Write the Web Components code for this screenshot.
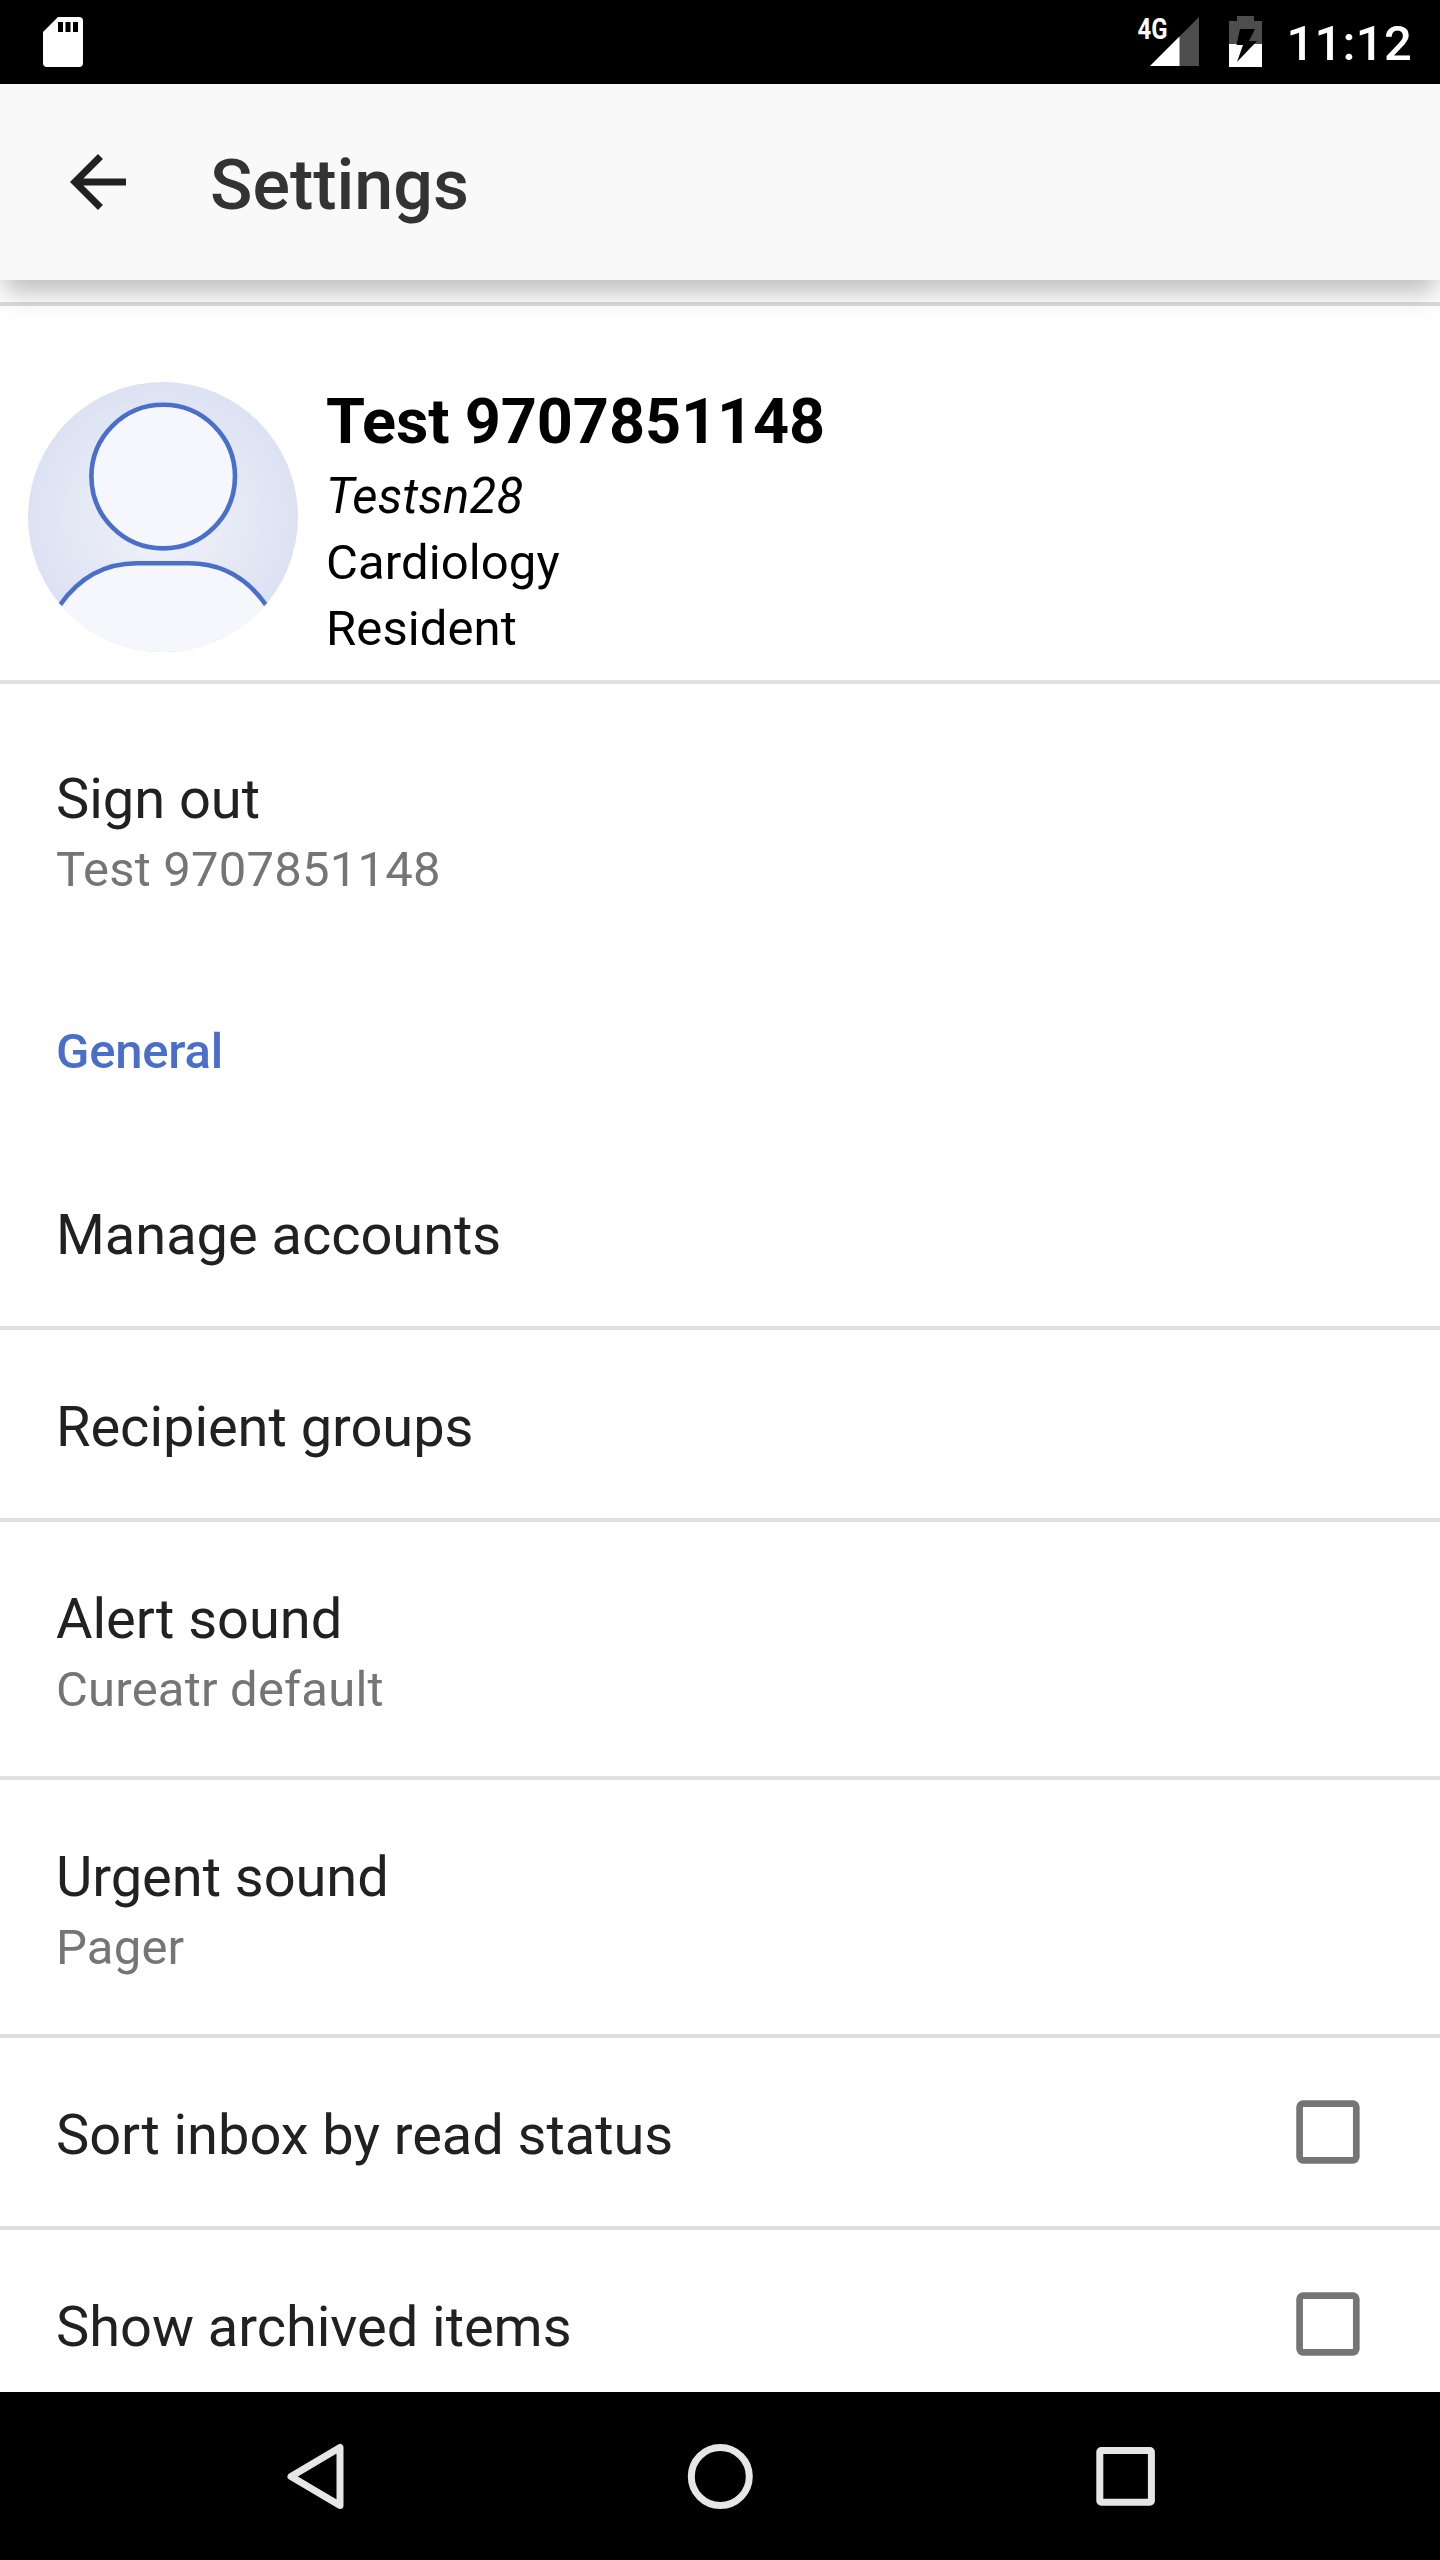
<!DOCTYPE html>
<html lang="en">
<head>
<meta charset="utf-8">
<title>Settings</title>
<style>
html,body{margin:0;padding:0}
body{width:1440px;height:2560px;overflow:hidden;font-family:Roboto,"Liberation Sans",sans-serif;background:#fff}
</style>
</head>
<body>
<settings-screen></settings-screen>
<script>
function define(name, html, setup) {
  const t = document.createElement('template');
  t.innerHTML = html;
  customElements.define(name, class extends HTMLElement {
    constructor() {
      super();
      this.attachShadow({ mode: 'open' }).appendChild(t.content.cloneNode(true));
    }
    connectedCallback() { if (setup) setup(this, this.shadowRoot); }
  });
}

define('status-bar', `
<style>
:host{display:flex;justify-content:space-between;height:84px;background:#000;color:#fff;flex:none}
svg{display:block}
.right{display:flex;padding-right:28px}
.time{font-size:49px;font-weight:500;line-height:58px;padding-top:15px;margin-left:21px;letter-spacing:.25px}
</style>
<svg width="100" height="84" viewBox="0 0 100 84"><path fill="#fff" d="M58 17H79a4 4 0 0 1 4 4V63a4 4 0 0 1-4 4H47a4 4 0 0 1-4-4V32Z"/><path fill="#000" d="M58 22h5v10h-5zM65.500 22h5v10h-5zM73 22h5v10h-5z"/></svg>
<div class="right">
<svg width="132" height="84" viewBox="1133 0 132 84">
<path fill="#4d4d4d" d="M1199 17V66H1150Z"/><path fill="#fff" d="M1179.500 36.500V66H1150Z"/>
<text x="1137.500" y="39" fill="#fff" textLength="30" lengthAdjust="spacingAndGlyphs" font-family="Roboto" font-weight="700" font-size="29">4G</text>
<path fill="#4d4d4d" d="M1237 16h17v5h8v23h-33V21h8Z"/><path fill="#fff" d="M1229 44h33v23h-33Z"/>
<path fill="#000" d="M1240 29H1255L1249 41H1257L1237 62L1243 45H1236.500Z"/>
</svg>
<div class="time">11:12</div>
</div>`);

define('app-bar', `
<style>
:host{display:flex;align-items:center;height:196px;background:#f9f9f9;flex:none;position:relative;z-index:2;box-shadow:0 17px 24px -4px rgba(0,0,0,.25)}
svg{display:block;margin-left:56px;width:84px;height:84px}
h1{margin:0 0 0 70px;font-size:70px;font-weight:500;line-height:82px;color:#333;padding-top:6px}
</style>
<svg viewBox="0 0 24 24"><path fill="#212121" d="M20 11H7.830l5.590-5.590L12 4l-8 8 8 8 1.410-1.410L7.830 13H20v-2z"/></svg>
<h1><slot></slot></h1>`);

define('user-avatar', `
<style>:host{display:block;width:270px;height:270px;flex:none}svg{display:block}</style>
<svg width="270" height="270" viewBox="28 382 270 270">
<defs><clipPath id="c"><circle cx="163" cy="517" r="135"/></clipPath>
<radialGradient id="g"><stop offset="0" stop-color="#f2f3fb"/><stop offset=".6" stop-color="#e5e9f5"/><stop offset="1" stop-color="#dce2f3"/></radialGradient></defs>
<g clip-path="url(#c)"><rect x="28" y="382" width="270" height="270" fill="url(#g)"/>
<path fill="#f5f7fd" d="M60 605A84 84 0 0 1 133 563.300H193A84 84 0 0 1 266 605V660H60Z"/>
<path fill="none" stroke="#4a6fcb" stroke-width="4.600" d="M60 605C79 578 105 563.300 137 563.300H189C221 563.300 247 578 266 605"/>
<circle cx="163.200" cy="476.600" r="71.800" fill="#f5f7fd" stroke="#4a6fcb" stroke-width="4.600"/></g>
</svg>`);

define('profile-card', `
<style>
:host{display:flex;height:374px;border-top:4px solid #dcdcdc;border-bottom:4px solid #e0e0e0;padding:0 28px;box-sizing:content-box}
user-avatar{margin-top:76px}
.info{display:flex;flex-direction:column;margin-left:28px;padding-top:79px;color:#000;font-size:49px;line-height:66px;letter-spacing:.1px}
.name{font-weight:700;font-size:63px;line-height:74px;margin-bottom:5px;letter-spacing:-.14px}
.nick{font-style:italic;letter-spacing:.25px}
</style>
<user-avatar></user-avatar>
<div class="info">
<div class="name"><slot name="name"></slot></div>
<div class="nick"><slot name="nick"></slot></div>
<div><slot name="dept"></slot></div>
<div><slot name="role"></slot></div>
</div>`);

define('section-title', `
<style>:host{display:flex;align-items:center;height:182px;padding:8px 56px 0;box-sizing:border-box;font-size:49px;font-weight:500;color:#4a6fcb;letter-spacing:-.2px}</style>
<slot></slot>`);

define('pref-row', `
<style>
:host{display:flex;justify-content:space-between;height:188px;padding:0 56px;border-bottom:4px solid #e0e0e0}
:host([summary]){height:254px}
:host([plain]){border-bottom:0}
.text{display:flex;flex-direction:column;padding-top:64px}
.t{font-size:56px;line-height:66px;color:#212121;letter-spacing:-.04px}
.s{font-size:49px;line-height:58px;padding-top:9px;color:#757575;letter-spacing:.2px}
:host(:not([summary])) .s{display:none}
.box{display:none;width:84px;height:84px;margin:52px 14px 0 0}
:host([check]) .box{display:block}
</style>
<div class="text"><div class="t"><slot></slot></div><div class="s"></div></div>
<svg class="box" viewBox="0 0 84 84"><rect x="13.600" y="13.600" width="56.700" height="56.700" rx="3.500" fill="none" stroke="#757575" stroke-width="6.700"/></svg>`,
(h, r) => { r.querySelector('.s').textContent = h.getAttribute('summary') || ''; });

define('nav-bar', `
<style>
:host{display:flex;height:168px;background:#000;flex:none;justify-content:center;align-items:center;gap:321px}
svg{display:block;width:84px;height:84px;fill:none;stroke:#e6e6e6}
</style>
<svg viewBox="273 2434 84 84"><path stroke-width="7" stroke-linejoin="round" d="M340 2447.500V2505.500L291 2476.500Z"/></svg>
<svg viewBox="678 2434 84 84"><circle cx="720.300" cy="2476.500" r="29" stroke-width="7"/></svg>
<svg viewBox="1083 2434 84 84"><rect x="1099.800" y="2450.600" width="51.600" height="51.600" rx="1.500" stroke-width="7"/></svg>`);

define('settings-screen', `
<style>
:host{display:flex;flex-direction:column;width:1440px;height:2560px;background:#fff}
main{flex:1;min-height:0;overflow:hidden;padding-top:22px;display:flex;flex-direction:column}
main>*{flex:none}
.first{margin-top:18px}
</style>
<status-bar></status-bar>
<app-bar>Settings</app-bar>
<main>
<profile-card><span slot="name">Test 9707851148</span><span slot="nick">Testsn28</span><span slot="dept">Cardiology</span><span slot="role">Resident</span></profile-card>
<pref-row class="first" plain summary="Test 9707851148">Sign out</pref-row>
<section-title>General</section-title>
<pref-row>Manage accounts</pref-row>
<pref-row>Recipient groups</pref-row>
<pref-row summary="Cureatr default">Alert sound</pref-row>
<pref-row summary="Pager">Urgent sound</pref-row>
<pref-row check>Sort inbox by read status</pref-row>
<pref-row check>Show archived items</pref-row>
</main>
<nav-bar></nav-bar>`);
</script>
</body>
</html>
